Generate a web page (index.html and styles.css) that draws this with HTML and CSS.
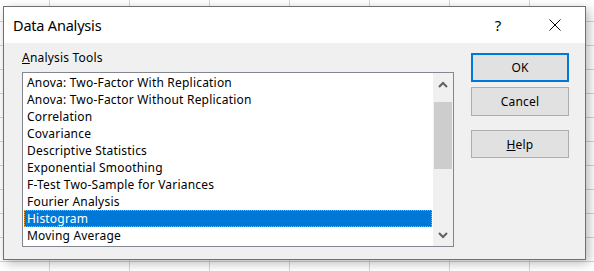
FILE: index.html
```html
<!DOCTYPE html>
<html>
  <head>
    <title>Data Analysis</title>
    <link rel="stylesheet" href="styles.css">
  </head>
  <body>
    <div class="dialog">
      <div class="titlebar">
        <span class="title">Data Analysis</span>
        <span class="help-icon">?</span>
        <span class="close-icon">
          <svg width="12" height="12" viewBox="0 0 12 12">
            <path d="M0.5 0.5 L11.5 11.5 M11.5 0.5 L0.5 11.5" stroke="#000" stroke-width="1" fill="none" />
          </svg>
        </span>
      </div>

      <div class="content">
        <div class="tools">
          <div class="label"><u>A</u>nalysis Tools</div>
          <div class="listbox">
            <ul class="items">
              <li>Anova: Two-Factor With Replication</li>
              <li>Anova: Two-Factor Without Replication</li>
              <li>Correlation</li>
              <li>Covariance</li>
              <li>Descriptive Statistics</li>
              <li>Exponential Smoothing</li>
              <li>F-Test Two-Sample for Variances</li>
              <li>Fourier Analysis</li>
              <li class="selected">Histogram</li>
              <li>Moving Average</li>
            </ul>
            <div class="scrollbar">
              <div class="arrow">
                <svg width="10" height="7" viewBox="0 0 10 7">
                  <path d="M1 6 L5 2 L9 6" stroke="#606060" stroke-width="2" fill="none" />
                </svg>
              </div>
              <div class="track">
                <div class="thumb"></div>
              </div>
              <div class="arrow">
                <svg width="10" height="7" viewBox="0 0 10 7">
                  <path d="M1 1 L5 5 L9 1" stroke="#606060" stroke-width="2" fill="none" />
                </svg>
              </div>
            </div>
          </div>
        </div>

        <div class="buttons">
          <button class="default">OK</button>
          <button>Cancel</button>
          <button class="help"><u>H</u>elp</button>
        </div>
      </div>
    </div>
  </body>
</html>
```

FILE: styles.css
```css
body {
  margin: 0;
  height: 271px;
  overflow: hidden;
  background-color: #fff;
  /* Excel grid behind the dialog */
  background-image: linear-gradient(to right, #d4d4d4 1px, transparent 1px),
    linear-gradient(to bottom, #d4d4d4 1px, transparent 1px);
  background-size: 80px 24px;
  background-position: 49px 21px;
  font-family: "Noto Sans", "Open Sans", sans-serif;
  font-size: 12px;
  letter-spacing: 0.2px;
  color: #000;
}

.dialog {
  width: 581px;
  height: 252px;
  margin: 6px 0 0 3px;
  border: 1px solid #707070;
  background: #f0f0f0;
  box-shadow: 3px 3px 10px rgba(0, 0, 0, 0.28);
}

.titlebar {
  height: 36px;
  background: #fff;
  display: flex;
  align-items: center;
  padding-left: 9px;
}

.title {
  flex: 1;
  font-size: 14.5px;
  letter-spacing: -0.2px;
}

.help-icon {
  width: 46px;
  margin-right: 11px;
  text-align: center;
  font-size: 15px;
}

.close-icon {
  width: 46px;
  margin-right: 7px;
  display: flex;
  justify-content: center;
}

.content {
  display: flex;
  padding: 0 16px 0 18px;
}

.tools {
  width: 432px;
}

.label {
  height: 29px;
  line-height: 17px;
  padding-top: 6px;
  box-sizing: border-box;
}

.listbox {
  display: flex;
  height: 175px;
  box-sizing: border-box;
  border: 1px solid #828790;
  background: #fff;
}

.items {
  flex: 1;
  list-style: none;
  margin: 0;
  padding: 1px 1px 0 1px;
}

.items li {
  height: 17px;
  line-height: 18px;
  padding-left: 3px;
  white-space: nowrap;
  box-sizing: border-box;
}

.items .selected {
  background: #0078d7;
  color: #fff;
  outline: 1px dotted #f0a030;
  outline-offset: -1px;
}

.scrollbar {
  width: 20px;
  background: #f0f0f0;
  display: flex;
  flex-direction: column;
}

.arrow {
  height: 22px;
  display: flex;
  align-items: center;
  justify-content: center;
}

.track {
  flex: 1;
  padding-top: 7px;
}

.thumb {
  height: 67px;
  margin: 0 1px;
  background: #cdcdcd;
}

.buttons {
  display: flex;
  flex-direction: column;
  margin-left: 17px;
  padding-top: 10px;
}

button {
  width: 98px;
  height: 29px;
  margin-bottom: 5px;
  border: 1px solid #adadad;
  background: #e1e1e1;
  font-family: "Noto Sans", "Open Sans", sans-serif;
  font-size: 12px;
  letter-spacing: 0.2px;
  color: #000;
  padding: 0;
}

button.default {
  border: 2px solid #0078d7;
}

button.help {
  margin-top: 9px;
  height: 28px;
}
```
